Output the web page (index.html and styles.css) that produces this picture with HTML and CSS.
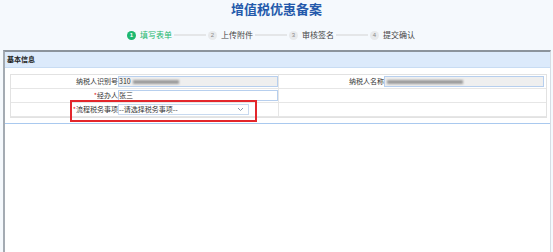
FILE: index.html
```html
<!DOCTYPE html>
<html lang="zh-CN">

<head>
    <meta charset="UTF-8">
    <meta name="viewport" content="width=device-width, initial-scale=1.0">
    <title>增值税优惠备案</title>
    <link rel="stylesheet" href="styles.css">
</head>

<body>
    <h1 class="pageTitle">增值税优惠备案</h1>

    <!-- Steps -->
    <div class="steps">
        <div class="step active"><span class="stepNum">1</span><span class="stepText">填写表单</span></div>
        <span class="stepLine"></span>
        <div class="step"><span class="stepNum">2</span><span class="stepText">上传附件</span></div>
        <span class="stepLine"></span>
        <div class="step"><span class="stepNum">3</span><span class="stepText">审核签名</span></div>
        <span class="stepLine"></span>
        <div class="step"><span class="stepNum">4</span><span class="stepText">提交确认</span></div>
    </div>

    <!-- Form panel -->
    <div class="panel">
        <div class="panelHead">基本信息</div>
        <div class="formBody">
            <div class="formTable">
                <div class="fRow">
                    <div class="fLabel">纳税人识别号</div>
                    <div class="fValue">
                        <div class="fInput readonly">310<span class="blurBlock wideA"></span></div>
                    </div>
                    <div class="fLabel sep">纳税人名称</div>
                    <div class="fValue">
                        <div class="fInput readonly"><span class="blurBlock wideB"></span></div>
                    </div>
                </div>
                <div class="fRow">
                    <div class="fLabel"><span class="req">*</span>经办人</div>
                    <div class="fValue">
                        <div class="fInput">张三</div>
                    </div>
                    <div class="fLabel sep"></div>
                    <div class="fValue"></div>
                </div>
                <div class="fRow">
                    <div class="fLabel"><span class="req">*</span>流程税务事项</div>
                    <div class="fValue">
                        <div class="fSelect">
                            <span>--请选择税务事项--</span>
                            <svg class="selArrow" width="7" height="5" viewBox="0 0 7 5">
                                <path d="M1 1 L3.5 3.5 L6 1" fill="none" stroke="#8a9bb0" stroke-width="1"/>
                            </svg>
                        </div>
                    </div>
                    <div class="fLabel sep"></div>
                    <div class="fValue"></div>
                </div>
                <div class="highlightBox"></div>
            </div>
        </div>
    </div>
</body>

</html>
```

FILE: styles.css
```css
body {
    font-family: "Noto Sans CJK SC", "Liberation Sans", sans-serif;
    margin: 0;
    padding: 0;
    background-color: #f5f9fd;
    height: 252px;
    overflow: hidden;
    display: flex;
    flex-direction: column;
}

.pageTitle {
    margin: 0;
    height: 20px;
    font-size: 13px;
    line-height: 18px;
    font-weight: bold;
    color: #2459ab;
    text-align: center;
}

/* Steps */
.steps {
    display: flex;
    align-items: center;
    height: 30px;
    padding-left: 127px;
}

.step {
    display: flex;
    align-items: center;
    gap: 4px;
}

.stepNum {
    width: 9px;
    height: 9px;
    border-radius: 50%;
    background-color: #e8eaec;
    color: #888;
    font-size: 6px;
    line-height: 9px;
    text-align: center;
    font-family: "Liberation Sans", sans-serif;
}

.stepText {
    font-size: 8px;
    line-height: 10px;
    color: #444;
    width: 32px;
}

.step.active .stepNum {
    background-color: #1db870;
    color: #fff;
    font-weight: bold;
}

.step.active .stepText {
    color: #1db870;
}

.stepLine {
    width: 32px;
    height: 2px;
    background-color: #e4e6e8;
    margin: 0 2px 0 2px;
}

/* Panel */
.panel {
    flex: 1;
    margin: 0 2px 0 3px;
    background-color: #fff;
    border-left: 2px solid #a4abb3;
    border-top: 2px solid #8b939c;
    border-right: 1px solid #d6dde4;
}

.panelHead {
    height: 15px;
    background-color: #dceafb;
    border-bottom: 1px solid #c8dcf3;
    font-size: 7px;
    line-height: 14px;
    font-weight: bold;
    color: #222;
    padding-left: 2px;
}

.formBody {
    padding: 6px 3px 5px 5px;
    border-bottom: 1px solid #a9c9ef;
}

.formTable {
    position: relative;
    border: 1px solid #e2e2e2;
}

.fRow {
    display: grid;
    grid-template-columns: 107px 160px 106px 1fr;
    height: 13px;
    border-bottom: 1px solid #e6e6e6;
}

.fRow:last-of-type {
    border-bottom: none;
}

.fLabel {
    font-size: 7px;
    line-height: 13px;
    color: #333;
    text-align: right;
    white-space: nowrap;
}

.fLabel.sep {
    border-left: 1px solid #e6e6e6;
}

.req {
    color: #e02424;
}

.fValue {
    display: flex;
    align-items: center;
}

.fInput {
    width: 158px;
    height: 9px;
    border: 1px solid #b7cfee;
    background-color: #fff;
    font-size: 7px;
    line-height: 9px;
    color: #333;
    display: flex;
    align-items: center;
}

.fInput.readonly {
    background-color: #efefef;
}

.blurBlock {
    display: inline-block;
    height: 4px;
    background-color: #9a9a9a;
    filter: blur(1.2px);
    margin-left: 2px;
}

.wideA {
    width: 46px;
}

.wideB {
    width: 76px;
}

.fSelect {
    width: 127px;
    height: 9px;
    border: 1px solid #c8d9ef;
    background-color: #fff;
    font-size: 7px;
    line-height: 9px;
    color: #333;
    display: flex;
    align-items: center;
    justify-content: space-between;
    padding-right: 2px;
}

.selArrow {
    margin-right: 2px;
}

/* red highlight overlay */
.highlightBox {
    position: absolute;
    left: 59px;
    top: 25px;
    width: 183px;
    height: 18px;
    border: 2px solid #e3262b;
}
```
